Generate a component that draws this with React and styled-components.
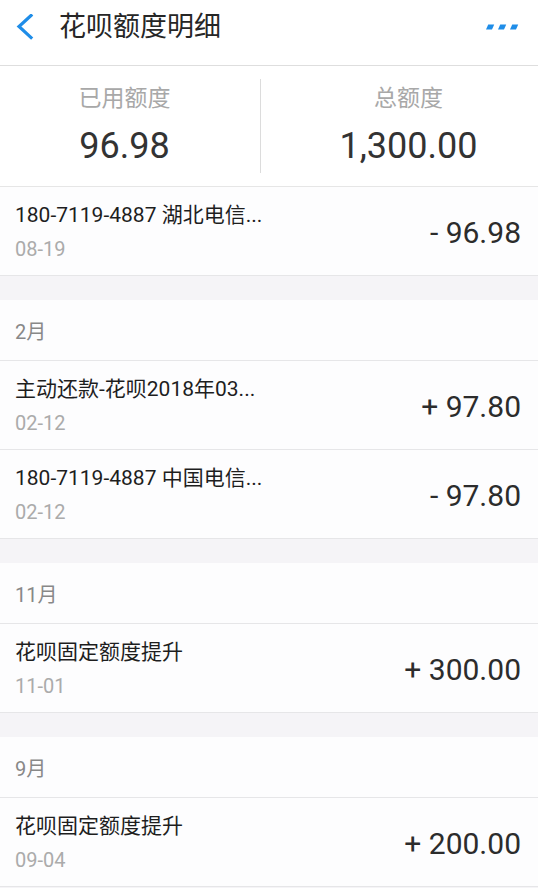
import React from "react";
import styled, { createGlobalStyle } from "styled-components";

const Global = createGlobalStyle`
  html, body { margin: 0; padding: 0; background: #f5f4f7; }
  body { font-family: Roboto, "Noto Sans CJK SC", sans-serif; -webkit-font-smoothing: antialiased; }
  * { box-sizing: border-box; }
`;

const Page = styled.div`
  width: 538px;
  min-height: 888px;
  background: #f5f4f7;
  display: flex;
  flex-direction: column;
`;

const Header = styled.header`
  height: 66px;
  background: #fff;
  border-bottom: 1px solid #dedede;
  display: flex;
  align-items: flex-start;
  padding: 10px 18px 0 16px;
`;

const BackBtn = styled.div`
  width: 20px;
  height: 34px;
  display: flex;
  align-items: center;
`;

const Title = styled.h1`
  margin: 0 0 0 23px;
  flex: 1;
  font-size: 27px;
  line-height: 34px;
  font-weight: 400;
  color: #262626;
`;

const More = styled.div`
  height: 34px;
  display: flex;
  align-items: center;
`;

const Summary = styled.section`
  height: 121px;
  background: #fff;
  border-bottom: 1px solid #e6e6e6;
  display: flex;
  align-items: center;
  padding-bottom: 4px;
`;

const Col = styled.div`
  flex: ${(p) => p.$flex};
  display: flex;
  flex-direction: column;
  align-items: center;
  padding-left: ${(p) => p.$pl || 0}px;
  padding-right: ${(p) => p.$pr || 0}px;
`;

const ColLabel = styled.div`
  font-size: 23px;
  line-height: 30px;
  color: #a8a8a8;
`;

const ColValue = styled.div`
  margin-top: 14px;
  font-size: 36px;
  line-height: 36px;
  color: #333;
`;

const VDivider = styled.div`
  width: 1px;
  height: 94px;
  margin-top: 4px;
  background: #dcdcdc;
`;

const Gap = styled.div`
  height: 24px;
  background: #f5f4f7;
`;

const MonthHead = styled.div`
  height: 61px;
  background: #fdfdfe;
  border-bottom: 1px solid #e6e6e8;
  display: flex;
  align-items: center;
  padding-left: 15px;
  font-size: 20px;
  color: #888;
`;

const Row = styled.div`
  height: 89px;
  background: #fdfdfe;
  border-bottom: 1px solid #e6e6e8;
  display: flex;
  align-items: center;
  padding: 0 17px 0 15px;
`;

const RowMain = styled.div`
  flex: 1;
  display: flex;
  flex-direction: column;
  padding-top: 2px;
`;

const RowTitle = styled.div`
  font-size: 21px;
  line-height: 28px;
  color: #1e1e1e;
`;

const RowDate = styled.div`
  margin-top: 6px;
  font-size: 20px;
  line-height: 28px;
  color: #ababab;
`;

const Amount = styled.div`
  font-size: 30px;
  line-height: 36px;
  color: #2c2c2c;
  padding-top: 4px;
`;

const records = [
  { month: null, items: [{ title: "180-7119-4887 湖北电信...", date: "08-19", amount: "- 96.98" }] },
  {
    month: "2月",
    items: [
      { title: "主动还款-花呗2018年03...", date: "02-12", amount: "+ 97.80" },
      { title: "180-7119-4887 中国电信...", date: "02-12", amount: "- 97.80" },
    ],
  },
  { month: "11月", items: [{ title: "花呗固定额度提升", date: "11-01", amount: "+ 300.00" }] },
  { month: "9月", items: [{ title: "花呗固定额度提升", date: "09-04", amount: "+ 200.00" }] },
];

export default function App() {
  return (
    <Page>
      <Global />
      <Header>
        <BackBtn>
          <svg width="20" height="26" viewBox="0 0 20 26">
            <polyline points="15,1.5 3,12.5 15,23.5" fill="none" stroke="#1f8de8" strokeWidth="3.2" strokeLinecap="square" />
          </svg>
        </BackBtn>
        <Title>花呗额度明细</Title>
        <More>
          <svg width="34" height="6" viewBox="0 0 34 6">
            <polygon points="0,5.5 2.2,0.5 8.2,0.5 6,5.5" fill="#1f8de8" />
            <polygon points="12,5.5 14.2,0.5 20.2,0.5 18,5.5" fill="#1f8de8" />
            <polygon points="24,5.5 26.2,0.5 32.2,0.5 30,5.5" fill="#1f8de8" />
          </svg>
        </More>
      </Header>
      <Summary>
        <Col $flex="263" $pr={11}>
          <ColLabel>已用额度</ColLabel>
          <ColValue>96.98</ColValue>
        </Col>
        <VDivider />
        <Col $flex="274" $pl={18}>
          <ColLabel>总额度</ColLabel>
          <ColValue>1,300.00</ColValue>
        </Col>
      </Summary>
      {records.map((g, gi) => (
        <React.Fragment key={gi}>
          {g.month && (
            <>
              <Gap />
              <MonthHead>{g.month}</MonthHead>
            </>
          )}
          {g.items.map((it, i) => (
            <Row key={i}>
              <RowMain>
                <RowTitle>{it.title}</RowTitle>
                <RowDate>{it.date}</RowDate>
              </RowMain>
              <Amount>{it.amount}</Amount>
            </Row>
          ))}
        </React.Fragment>
      ))}
    </Page>
  );
}
